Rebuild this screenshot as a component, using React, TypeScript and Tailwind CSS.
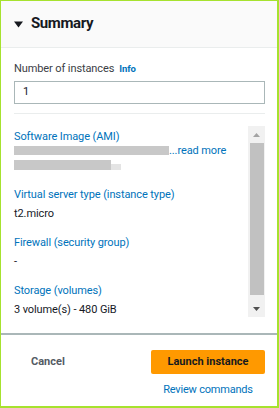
import React from "react";

const font = { fontFamily: "Roboto, Arial, sans-serif" };

function Field({ label, children }: { label: string; children: React.ReactNode }) {
  return (
    <div className="flex flex-col">
      <div className="text-[11px] leading-[16px] tracking-[-0.1px] text-[#0073bb]">{label}</div>
      <div className="mt-[3px] text-[11px] leading-[16px] tracking-[-0.1px] text-[#16191f]">{children}</div>
    </div>
  );
}

export default function App() {
  return (
    <div
      className="w-[279px] h-[408px] bg-white border-l border-t border-r-2 border-b-2 border-[#a6e22e] flex flex-col overflow-hidden"
      style={font}
    >
      <div className="h-[47px] shrink-0 bg-[#fafafa] border-b border-[#eaeded] flex items-center pl-[13px] gap-[8px]">
        <svg width="9" height="7" viewBox="0 0 9 7">
          <path d="M0 0.5 H9 L4.5 6.5 Z" fill="#16191f" />
        </svg>
        <span className="-mt-[1px] text-[15px] tracking-[-0.4px] font-bold text-[#16191f] leading-none">Summary</span>
      </div>

      <div className="pl-[13px] pr-[12px] pt-[13px] flex flex-col">
        <div className="flex items-center gap-[5px] text-[11px] leading-[16px] tracking-[-0.1px] text-[#3b4045]">
          <span>Number of instances</span>
          <span className="text-[9.5px] font-bold text-[#0073bb]">Info</span>
        </div>
        <div className="mt-[4px] h-[23px] border border-[#aab7b8] flex items-center pl-[8px] text-[11px] text-[#16191f]">
          1
        </div>
        <div className="mt-[9px] h-px bg-[#eaeded]" />

        <div className="mt-[12px] h-[191px] flex">
          <div className="flex-1 flex flex-col gap-[13px] pt-[3px]">
            <div className="flex flex-col">
              <div className="text-[11px] leading-[16px] tracking-[-0.1px] text-[#0073bb]">Software Image (AMI)</div>
              <div className="mt-[1px] flex items-center h-[9px]">
                <div className="w-[155px] h-[9px] bg-[#c8c8c8]" />
                <span className="text-[11px] leading-none tracking-[-0.1px] text-[#0073bb]">...read more</span>
              </div>
              <div className="mt-[5px] flex items-center h-[10px]">
                <div className="w-[97px] h-[10px] bg-[#c8c8c8]" />
                <div className="w-[10px] h-[6px] mt-[3px] bg-[#e4e4e4]" />
              </div>
            </div>
            <div className="mt-[4px]">
              <Field label="Virtual server type (instance type)">t2.micro</Field>
            </div>
            <Field label="Firewall (security group)">-</Field>
            <Field label="Storage (volumes)">3 volume(s) - 480 GiB</Field>
          </div>
          <div className="w-[17px] bg-[#f1f1f1] flex flex-col items-center">
            <div className="h-[17px] flex items-center justify-center">
              <svg width="7" height="4" viewBox="0 0 7 4">
                <path d="M0 4 L3.5 0 L7 4 Z" fill="#a3a3a3" />
              </svg>
            </div>
            <div className="w-[14px] h-[152px] bg-[#c1c1c1]" />
            <div className="flex-1" />
            <div className="h-[17px] flex items-center justify-center">
              <svg width="7" height="4" viewBox="0 0 7 4">
                <path d="M0 0 L7 0 L3.5 4 Z" fill="#505050" />
              </svg>
            </div>
          </div>
        </div>
      </div>

      <div className="mt-[16px] h-[2px] bg-[#aab7b8]" />

      <div className="flex justify-between pl-[13px] pr-[12px] pt-[15px]">
        <span className="ml-[17px] mt-[4px] text-[11px] leading-[16px] font-bold text-[#545b64]">Cancel</span>
        <div className="w-[114px] flex flex-col items-center">
          <div className="w-full h-[24px] bg-[#ff9900] rounded-[2px] flex items-center justify-center text-[11px] font-bold text-[#16191f]">
            Launch instance
          </div>
          <span className="mt-[8px] text-[11px] leading-[16px] tracking-[-0.2px] text-[#0073bb]">Review commands</span>
        </div>
      </div>
    </div>
  );
}
